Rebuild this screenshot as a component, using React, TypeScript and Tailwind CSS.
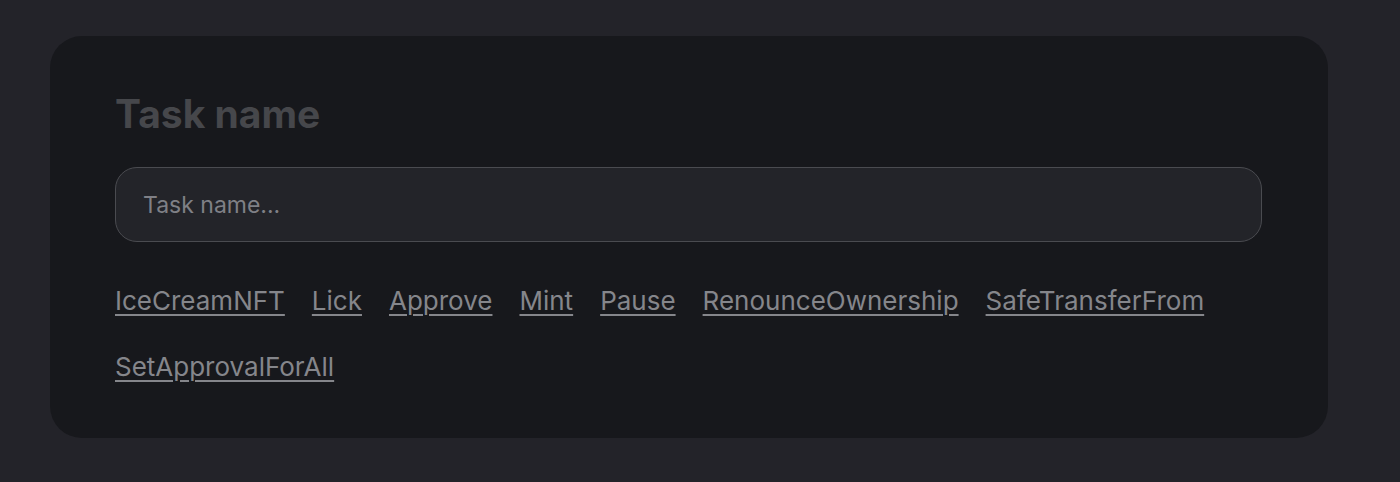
const FUNCTIONS = [
  'IceCreamNFT',
  'Lick',
  'Approve',
  'Mint',
  'Pause',
  'RenounceOwnership',
  'SafeTransferFrom',
  'SetApprovalForAll',
]

export default function App() {
  return (
    <div
      className="min-h-[482px] bg-[#232329] pl-[50px] pr-[72px] pt-[36px] pb-[44px]"
      style={{ fontFamily: 'Inter, "Noto Sans", sans-serif' }}
    >
      <div className="rounded-[32px] bg-[#17181c] pl-[65px] pr-[66px] pt-[56px] pb-[44px] h-[402px]">
        <h2 className="text-[39px] leading-[44px] font-bold text-[#46474b]">Task name</h2>

        <input
          type="text"
          placeholder="Task name..."
          className="mt-[31px] block w-full h-[75px] rounded-[22px] border border-[#4a4b50] bg-[#232429] px-[27px] text-[23px] text-[#c4c5ca] placeholder:text-[#7f8086] outline-none"
        />

        {/* Contract functions */}
        <div className="mt-[42px] flex flex-wrap gap-x-[27px] gap-y-[32px]">
          {FUNCTIONS.map((fn) => (
            <a
              key={fn}
              href="#"
              className="text-[26px] leading-[34px] text-[#85868b] underline underline-offset-[4px] decoration-[2px]"
            >
              {fn}
            </a>
          ))}
        </div>
      </div>
    </div>
  )
}
